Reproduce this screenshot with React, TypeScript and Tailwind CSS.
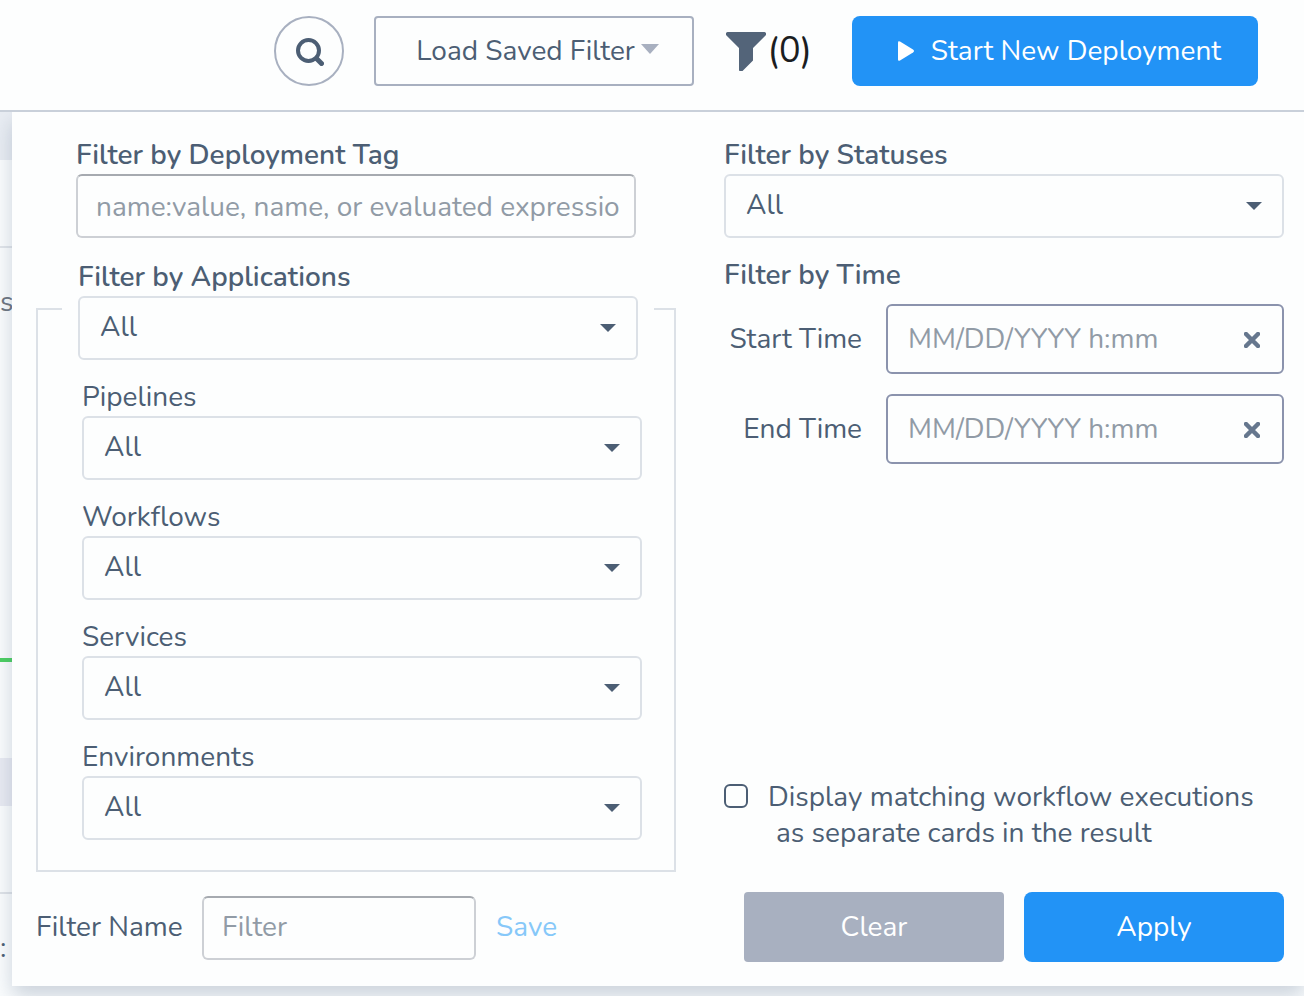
import { useState } from 'react';

interface SelectFieldProps {
  id: string;
  label: string;
  bold?: boolean;
}

const entityFilters = [
  { id: 'pipelines', label: 'Pipelines' },
  { id: 'workflows', label: 'Workflows' },
  { id: 'services', label: 'Services' },
  { id: 'environments', label: 'Environments' }
];

const timeFilters = [
  { id: 'start-time', label: 'Start Time' },
  { id: 'end-time', label: 'End Time' }
];

function Caret({ className }: { className: string }) {
  return (
    <svg viewBox="0 0 16 8" preserveAspectRatio="none" className={className} fill="currentColor" aria-hidden="true">
      <path d="M0 0h16L8 8z" />
    </svg>
  );
}

function SelectField({ id, label, bold }: SelectFieldProps) {
  return (
    <div className="flex flex-col">
      <label htmlFor={id} className={bold ? 'pb-0.5 font-semibold leading-[34px]' : 'pb-0.5 leading-[34px]'}>
        {label}
      </label>
      <div className="relative">
        <select
          id={id}
          className="block h-16 w-full appearance-none rounded-md border-2 border-[#dce1e7] bg-[#fdfefe] pb-0.5 pl-5 pr-12"
        >
          <option>All</option>
        </select>
        <Caret className="pointer-events-none absolute right-[22px] top-7 h-2 w-4" />
      </div>
    </div>
  );
}

function TimeField({ id, label }: { id: string; label: string }) {
  const [value, setValue] = useState('');

  return (
    <div className="flex items-center gap-6">
      <label htmlFor={id} className="flex-1 whitespace-nowrap text-right">
        {label}
      </label>
      <div className="relative w-[398px]">
        <input
          id={id}
          type="text"
          value={value}
          onChange={(e) => setValue(e.target.value)}
          placeholder="MM/DD/YYYY h:mm"
          className="block h-[70px] w-full rounded-md border-2 border-[#8b93ad] bg-[#fdfefe] pl-5 pr-14 placeholder:text-[#919ba6]"
        />
        <button
          type="button"
          aria-label={`Clear ${label}`}
          onClick={() => setValue('')}
          className="absolute right-6 top-7 h-4 w-4 text-[#66778e]"
        >
          <svg viewBox="0 0 16 16" className="h-4 w-4" stroke="currentColor" strokeWidth="4.5" strokeLinecap="round">
            <path d="M2 2l12 12M14 2L2 14" />
          </svg>
        </button>
      </div>
    </div>
  );
}

// Deployment cards that peek out from under the filter panel
function CardsBehind() {
  return (
    <div aria-hidden="true" className="absolute inset-0 flex flex-col overflow-hidden bg-[#fbfdfe]">
      <div className="h-12 shrink-0 bg-[#e9edf3]" />
      <div className="h-22 shrink-0 border-b-2 border-[#e1e5ea]" />
      <div className="h-[410px] shrink-0 pt-9 text-[#6d7580]">s</div>
      <div className="h-1 shrink-0 bg-[#4bd061]" />
      <div className="h-24 shrink-0" />
      <div className="h-12 shrink-0 bg-[#e9ebf3]" />
      <div className="h-22 shrink-0 border-b-2 border-[#dfe3e8]" />
      <div className="pt-9">:</div>
    </div>
  );
}

function FilterPanel() {
  return (
    <form
      onSubmit={(e) => e.preventDefault()}
      className="relative ml-3 grid grid-cols-[8fr_7fr] gap-x-12 gap-y-5 bg-[#fdfefe] pb-6 pl-6 pr-5 pt-[26px] shadow-[0_10px_20px_rgba(80,100,130,0.28)]"
    >
      <div className="flex flex-col gap-5">
        <div className="flex flex-col px-10">
          <label htmlFor="tag" className="pb-0.5 font-semibold leading-[34px]">
            Filter by Deployment Tag
          </label>
          <input
            id="tag"
            type="text"
            placeholder="name:value, name, or evaluated expression"
            className="h-16 w-full rounded-md border-2 border-[#cdd0d5] border-t-[#a6aab0] bg-[#fdfefe] pl-[18px] pr-3.5 pt-0.5 placeholder:text-[#919ba6]"
          />
        </div>

        <fieldset className="border-2 border-[#dce1e7] pb-[30px] pl-6 pr-5">
          <legend className="w-full px-4 pt-0.5">
            <SelectField id="applications" label="Filter by Applications" bold />
          </legend>
          <div className="flex flex-col gap-5 pl-5 pr-3 pt-5">
            {entityFilters.map((f) => (
              <SelectField key={f.id} id={f.id} label={f.label} />
            ))}
          </div>
        </fieldset>
      </div>

      <div className="flex flex-col">
        <SelectField id="statuses" label="Filter by Statuses" bold />
        <h2 className="mt-5 pb-0.5 font-semibold leading-[34px]">Filter by Time</h2>
        <div className="mt-2.5 flex flex-col gap-5">
          {timeFilters.map((f) => (
            <TimeField key={f.id} id={f.id} label={f.label} />
          ))}
        </div>
        <div className="mb-[21px] mt-auto flex items-start gap-5">
          <input
            id="separate-cards"
            type="checkbox"
            className="mt-[5px] h-6 w-6 shrink-0 appearance-none rounded-md border-2 border-[#4c5e74] checked:bg-[#4c5e74]"
          />
          <label htmlFor="separate-cards">
            Display matching workflow executions
            <span className="block pl-2">as separate cards in the result</span>
          </label>
        </div>
      </div>

      <div className="flex items-center pt-0.5">
        <label htmlFor="filter-name" className="w-[166px] whitespace-nowrap pb-0.5">
          Filter Name
        </label>
        <input
          id="filter-name"
          type="text"
          placeholder="Filter"
          className="h-16 w-[274px] rounded-md border-2 border-[#cdd0d5] border-t-[#a6aab0] bg-[#fdfefe] px-[18px] pb-0.5 placeholder:text-[#919ba6]"
        />
        <button type="button" className="ml-5 pb-0.5 text-[#86c8f9]">
          Save
        </button>
      </div>

      <div className="flex gap-5 pl-5 text-white">
        <button type="reset" className="h-[70px] flex-1 rounded bg-[#a8b0c0]">
          Clear
        </button>
        <button type="submit" className="h-[70px] flex-1 rounded-lg bg-[#2293f6]">
          Apply
        </button>
      </div>
    </form>
  );
}

export default function App() {
  return (
    <div className="min-h-screen bg-[#fdfefe] font-['Nunito','Lato',sans-serif] text-[28px] leading-9 text-[#4c5e74]">
      <header className="relative z-10 flex items-center justify-end border-b-2 border-[#c9d0da] bg-[#fdfefe] pb-6 pr-[46px] pt-4">
        <button
          type="button"
          aria-label="Search"
          className="flex h-[70px] w-[70px] items-center justify-center rounded-full border-2 border-[#a8b0c0] pl-0.5 pt-0.5"
        >
          <svg viewBox="0 0 28 28" className="h-7 w-7" fill="none" stroke="currentColor" strokeLinecap="round">
            <circle cx="12.5" cy="12.5" r="10.5" strokeWidth="4" />
            <path d="M20.500 20.500l5 5" strokeWidth="5" />
          </svg>
        </button>
        <button
          type="button"
          className="ml-[30px] flex h-[70px] w-80 items-center justify-center gap-1.5 rounded border-2 border-[#a8b0c0] pl-2"
        >
          Load Saved Filter
          <Caret className="mb-1 h-2.5 w-[18px] text-[#a8b0c0]" />
        </button>
        <button type="button" className="ml-8 flex items-center gap-0.5 text-[36px] text-[#1b1d21]">
          <svg viewBox="0 0 40 40" className="h-10 w-10 text-[#536479]" fill="currentColor" aria-hidden="true">
            <path d="M2 1h36a2 2 0 0 1 1.500 3.500L27 17v12.500L16.500 40q-3 1.500-3.500-1V17L.5 4.500A2 2 0 0 1 2 1z" />
          </svg>
          (0)
        </button>
        <button
          type="button"
          className="ml-10 flex h-[70px] w-[406px] items-center justify-center gap-4 rounded-lg bg-[#2293f6] pl-2 text-white"
        >
          <svg viewBox="0 0 18 22" className="h-[22px] w-[18px]" fill="currentColor" aria-hidden="true">
            <path d="M1 2.500Q1 .5 3 1.500L16 9.500Q18 11 16 12.500L3 20.500Q1 21.500 1 19.500z" />
          </svg>
          Start New Deployment
        </button>
      </header>

      <main className="relative pb-2.5">
        <CardsBehind />
        <FilterPanel />
      </main>
    </div>
  );
}
